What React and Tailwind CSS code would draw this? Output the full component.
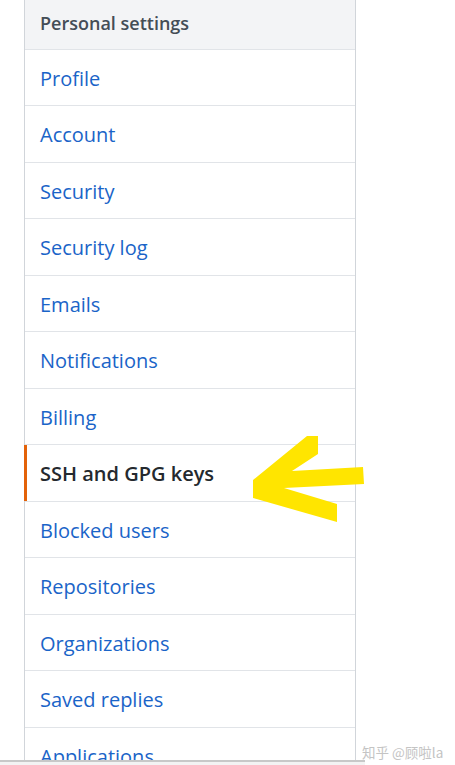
import React from "react";

const items = [
  "Profile",
  "Account",
  "Security",
  "Security log",
  "Emails",
  "Notifications",
  "Billing",
  "SSH and GPG keys",
  "Blocked users",
  "Repositories",
  "Organizations",
  "Saved replies",
  "Applications",
];

export default function App() {
  return (
    <div
      className="relative w-[455px] h-[765px] overflow-hidden bg-white"
      style={{ fontFamily: '"Open Sans", "Noto Sans", sans-serif' }}
    >
      <div className="h-[760px] overflow-hidden">
        <div className="ml-[24px] w-[332px] h-full border-x border-[#d1d5da] bg-white">
          <div className="h-[49.5px] bg-[#f3f4f6] border-b border-[#e1e4e8] flex items-center px-[15px] pb-[2px] text-[18px] font-semibold text-[#444d56]">
            Personal settings
          </div>
          {items.map((name) => {
            const selected = name === "SSH and GPG keys";
            return (
              <div
                key={name}
                className={
                  "relative h-[56.5px] border-b border-[#e1e4e8] flex items-center px-[15px] pt-[3px] text-[20px] " +
                  (selected ? "font-semibold text-[#24292e]" : "text-[#1a64c8]")
                }
              >
                {selected && (
                  <span className="absolute left-[-1px] top-0 bottom-0 w-[3px] bg-[#e36209]" />
                )}
                {name}
              </div>
            );
          })}
        </div>
      </div>
      <div className="w-[365px] h-[5px] border-t-2 border-[#c8c8c8] bg-[#f3f3f3]" />
      <div
        className="absolute left-[362px] top-[742px] text-[13.5px] text-[#c4c4c4]"
        style={{ fontFamily: '"Noto Sans CJK SC", "Noto Sans", sans-serif' }}
      >
        知乎 @顾啦la
      </div>
      <svg
        className="absolute left-0 top-0 pointer-events-none"
        width="455"
        height="765"
        viewBox="0 0 455 765"
      >
        <polygon
          points="307,436 318,436 318,454 292,471 363,467 364,484 284,488 337,504 337,522 253,498 253,480"
          fill="#ffe500"
        />
      </svg>
    </div>
  );
}
